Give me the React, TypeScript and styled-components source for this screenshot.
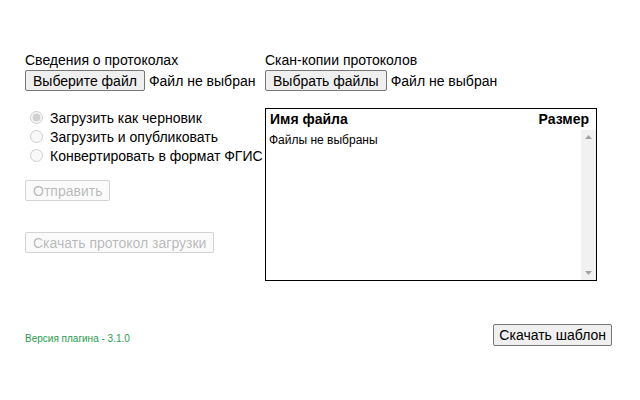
import styled, { createGlobalStyle } from "styled-components";

const GlobalStyle = createGlobalStyle`
  body {
    margin: 0;
    background: #ffffff;
    font-family: "Liberation Sans", Arial, sans-serif;
    font-size: 14px;
    color: #000000;
  }
`;

// 페이지 본문
const Page = styled.div`
  width: 640px;
  height: 400px;
  box-sizing: border-box;
  padding: 52px 28px 0 25px;
  display: flex;
  flex-direction: column;
`;

const Columns = styled.div`
  display: grid;
  grid-template-columns: 240px 332px;
  align-items: start;
`;

const Column = styled.div`
  display: flex;
  flex-direction: column;
`;

const Label = styled.div`
  line-height: 16px;
  height: 16px;
  margin-bottom: 2px;
  white-space: nowrap;
`;

const FileRow = styled.div`
  display: flex;
  align-items: center;
  gap: 4px;
  white-space: nowrap;
  height: 22px;
`;

const Button = styled.button`
  font-family: "Liberation Sans", Arial, sans-serif;
  font-size: 14px;
  line-height: 16px;
  height: 21px;
  padding: 1px 7px;
  background: #efefef;
  color: #000000;
  border: 1px solid #767676;
  border-radius: 2px;
  white-space: nowrap;
  align-self: flex-start;

  &:disabled {
    color: rgba(16, 16, 16, 0.3);
    background: rgba(239, 239, 239, 0.3);
    border-color: rgba(118, 118, 118, 0.3);
  }
`;

const Radios = styled.div`
  margin-top: 16px;
  display: flex;
  flex-direction: column;
`;

const RadioRow = styled.label`
  display: flex;
  align-items: center;
  height: 19px;
  white-space: nowrap;

  input {
    margin: 0 7px 0 5px;
    width: 13px;
    height: 13px;
  }
`;

const Actions = styled.div<{ $gap: number }>`
  margin-top: ${(p) => p.$gap}px;
`;

// 파일 목록 상자
const FileBox = styled.div`
  margin-top: 16px;
  width: 332px;
  height: 173px;
  box-sizing: border-box;
  border: 1px solid #000000;
  display: flex;
  flex-direction: column;
`;

const FileHeader = styled.div`
  display: flex;
  justify-content: space-between;
  font-weight: 700;
  line-height: 20px;
  height: 21px;
  padding: 0 7px 0 4px;
`;

const FileBody = styled.div`
  flex: 1;
  display: flex;
  min-height: 0;
`;

const FileList = styled.div`
  flex: 1;
  font-size: 12px;
  line-height: 18px;
  padding: 1px 3px;
`;

// 스크롤바 모양
const ScrollTrack = styled.div`
  width: 15px;
  background: #f1f1f1;
  display: flex;
  flex-direction: column;
  justify-content: space-between;
  align-items: center;
  padding: 5px 0;
`;

const Arrow = ({ down }: { down?: boolean }) => (
  <svg width="7" height="4" viewBox="0 0 7 4">
    <path d={down ? "M0 0H7L3.5 4Z" : "M0 4H7L3.5 0Z"} fill="#a3a3a3" />
  </svg>
);

const Footer = styled.div`
  margin-top: 43px;
  display: flex;
  justify-content: space-between;
  align-items: center;
`;

const Version = styled.div`
  font-size: 10px;
  color: #1f9d4c;
  margin-top: 7px;
`;

const FooterButton = styled(Button)`
  height: 22px;
  padding: 1px 5px;
  margin-right: 0;
`;

export default function App() {
  return (
    <>
      <GlobalStyle />
      <Page>
        <Columns>
          <Column>
            <Label>Сведения о протоколах</Label>
            <FileRow>
              <Button>Выберите файл</Button>
              <span>Файл не выбран</span>
            </FileRow>
            <Radios>
              <RadioRow>
                <input type="radio" name="mode" defaultChecked disabled />
                Загрузить как черновик
              </RadioRow>
              <RadioRow>
                <input type="radio" name="mode" disabled />
                Загрузить и опубликовать
              </RadioRow>
              <RadioRow>
                <input type="radio" name="mode" disabled />
                Конвертировать в формат ФГИС
              </RadioRow>
            </Radios>
            <Actions $gap={15}>
              <Button disabled>Отправить</Button>
            </Actions>
            <Actions $gap={31}>
              <Button disabled>Скачать протокол загрузки</Button>
            </Actions>
          </Column>
          <Column>
            <Label>Скан-копии протоколов</Label>
            <FileRow>
              <Button>Выбрать файлы</Button>
              <span>Файл не выбран</span>
            </FileRow>
            <FileBox>
              <FileHeader>
                <span>Имя файла</span>
                <span>Размер</span>
              </FileHeader>
              <FileBody>
                <FileList>Файлы не выбраны</FileList>
                <ScrollTrack>
                  <Arrow />
                  <Arrow down />
                </ScrollTrack>
              </FileBody>
            </FileBox>
          </Column>
        </Columns>
        <Footer>
          <Version>Версия плагина - 3.1.0</Version>
          <FooterButton>Скачать шаблон</FooterButton>
        </Footer>
      </Page>
    </>
  );
}
